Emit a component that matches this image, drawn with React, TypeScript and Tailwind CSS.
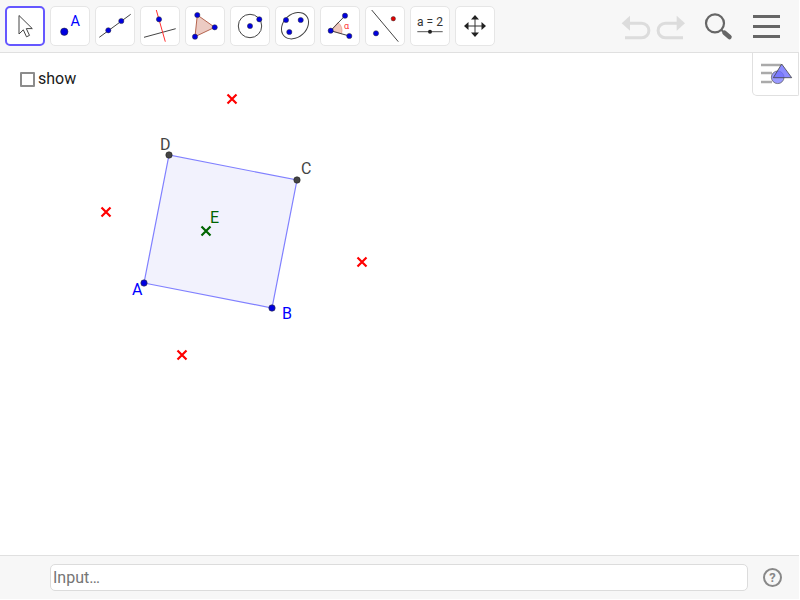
import type { ReactNode } from "react";

const font = { fontFamily: "Roboto, sans-serif" };

function Dot({ x, y, r = 2.6, fill = "#0000e0" }: { x: number; y: number; r?: number; fill?: string }) {
  return <circle cx={x} cy={y} r={r} fill={fill} stroke="#333" strokeWidth={0.5} />;
}

function ToolButton({ active, children }: { active?: boolean; children: ReactNode }) {
  return (
    <div
      className={
        active
          ? "w-10 h-10 shrink-0 bg-white rounded-[5px] border-2 border-[#6557ff]"
          : "w-10 h-10 shrink-0 bg-white rounded-[5px] border border-[#e6e6e6]"
      }
    >
      <svg
        width="40"
        height="40"
        viewBox="0 0 40 40"
        className={active ? "-mt-[2px] -ml-[2px]" : "-mt-px -ml-px"}
      >
        {children}
      </svg>
    </div>
  );
}

function Cross({ x, y, color }: { x: number; y: number; color: string }) {
  return (
    <path
      d={`M${x - 4.5} ${y - 4.5}L${x + 4.5} ${y + 4.5}M${x + 4.5} ${y - 4.5}L${x - 4.5} ${y + 4.5}`}
      stroke={color}
      strokeWidth={2.2}
      fill="none"
    />
  );
}

function Toolbar() {
  return (
    <div className="h-[53px] shrink-0 bg-[#f7f7f7] border-b border-[#e0e0e0] flex items-start pt-[6px] pl-[5px]">
      <div className="flex gap-[5px]">
        <ToolButton active>
          <path
            d="M14 9.5V28l4.3-4.2 3.2 7 3-1.4-3.2-6.8h6z"
            fill="#fff"
            stroke="#444"
            strokeWidth={1}
            strokeLinejoin="round"
          />
        </ToolButton>
        <ToolButton>
          <circle cx={14.3} cy={25.7} r={3.7} fill="#0000e0" stroke="#222" strokeWidth={0.5} />
          <text x={20.5} y={19.7} fontSize={14.5} fill="#0000ff" style={font}>
            A
          </text>
        </ToolButton>
        <ToolButton>
          <line x1={4.3} y1={31.3} x2={35.7} y2={8.3} stroke="#444" strokeWidth={1} />
          <Dot x={13.3} y={24.3} />
          <Dot x={26.3} y={15} />
        </ToolButton>
        <ToolButton>
          <line x1={4} y1={31.3} x2={35.7} y2={22.7} stroke="#444" strokeWidth={1} />
          <line x1={16.3} y1={4} x2={25.3} y2={35.7} stroke="#ff3030" strokeWidth={1} />
          <Dot x={19} y={13.3} />
        </ToolButton>
        <ToolButton>
          <path d="M12.3 9L29.7 21.3L10 30.7z" fill="#eccbc3" stroke="#b5654f" strokeWidth={1} />
          <Dot x={12.3} y={9} />
          <Dot x={29.7} y={21.3} />
          <Dot x={10} y={30.7} />
        </ToolButton>
        <ToolButton>
          <circle cx={20} cy={20} r={11.7} fill="none" stroke="#444" strokeWidth={1} />
          <Dot x={20} y={20} />
          <Dot x={29.3} y={13.3} />
        </ToolButton>
        <ToolButton>
          <ellipse
            cx={20}
            cy={19.7}
            rx={15}
            ry={11.5}
            transform="rotate(-42 20 19.7)"
            fill="none"
            stroke="#444"
            strokeWidth={1}
          />
          <Dot x={11} y={14} />
          <Dot x={25.7} y={14} />
          <Dot x={14.3} y={26} />
        </ToolButton>
        <ToolButton>
          <path d="M10.7 24.7L18 16.4A11 11 0 0 1 21.5 27.8z" fill="#f0c8bc" stroke="#e08a80" strokeWidth={0.6} />
          <line x1={10.7} y1={24.7} x2={25} y2={9.7} stroke="#444" strokeWidth={1} />
          <line x1={10.7} y1={24.7} x2={29.3} y2={30} stroke="#444" strokeWidth={1} />
          <text x={24} y={23} fontSize={9} fill="#ff3030" style={font}>
            α
          </text>
          <Dot x={10.7} y={24.7} />
          <Dot x={25} y={9.7} />
          <Dot x={29.3} y={30} />
        </ToolButton>
        <ToolButton>
          <line x1={6.7} y1={4} x2={33.3} y2={35.7} stroke="#444" strokeWidth={1} />
          <Dot x={28.3} y={12.7} r={2.2} fill="#e00000" />
          <Dot x={11} y={27.3} />
        </ToolButton>
        <ToolButton>
          <text x={20} y={19.5} fontSize={12} fill="#333" textAnchor="middle" style={font}>
            a = 2
          </text>
          <line x1={7.3} y1={25.7} x2={32.7} y2={25.7} stroke="#555" strokeWidth={1} />
          <circle cx={20} cy={25.7} r={2} fill="#222" />
        </ToolButton>
        <ToolButton>
          <path d="M20 12V28M12 20H28" stroke="#333" strokeWidth={1} />
          <path
            d="M20 9L24 13.5H16zM20 31L24 26.5H16zM9 20L13.5 16V24zM31 20L26.5 16V24z"
            fill="#222"
          />
        </ToolButton>
      </div>
      <svg width="70" height="30" viewBox="620 14 70 30" className="ml-[125px] mt-[8px] shrink-0">
        <path d="M621.7 23.3L630 15.7V30.7z" fill="#dcdcdc" />
        <path d="M629 23.3H641.7a7 7 0 0 1 0 14.4H625" fill="none" stroke="#dcdcdc" strokeWidth={3} />
        <path d="M685 23.3L676.7 15.7V30.7z" fill="#dcdcdc" />
        <path d="M678 23.3H665.3a7 7 0 0 0 0 14.4H683" fill="none" stroke="#dcdcdc" strokeWidth={3} />
      </svg>
      <svg width="34" height="34" viewBox="700 10 34 34" className="ml-[10px] mt-[4px] shrink-0">
        <circle cx={715} cy={23.3} r={9} fill="none" stroke="#666" strokeWidth={2.2} />
        <line x1={721.5} y1={30} x2={724} y2={32.5} stroke="#666" strokeWidth={2} />
        <line x1={724.5} y1={32.7} x2={729.5} y2={37} stroke="#666" strokeWidth={4.5} strokeLinecap="round" />
      </svg>
      <div className="w-[27px] ml-[19px] mt-[9px] flex flex-col gap-[7px] shrink-0">
        <div className="h-[3px] bg-[#666]" />
        <div className="h-[3px] bg-[#666]" />
        <div className="h-[3px] bg-[#666]" />
      </div>
    </div>
  );
}

function Canvas() {
  return (
    <div className="relative flex-1 bg-white">
      <svg width="799" height="502" viewBox="0 53 799 502" className="absolute inset-0" style={font}>
        <path
          d="M144 283L272 308L297 180L169 155z"
          fill="#f2f2fd"
          stroke="#8080ff"
          strokeWidth={1.2}
        />
        <Cross x={232} y={99} color="#ff0000" />
        <Cross x={106} y={212} color="#ff0000" />
        <Cross x={362} y={262} color="#ff0000" />
        <Cross x={182} y={355} color="#ff0000" />
        <Cross x={206} y={231} color="#006400" />
        <circle cx={144} cy={283} r={3.2} fill="#0000e0" stroke="#333" strokeWidth={0.6} />
        <circle cx={272} cy={308} r={3.2} fill="#0000e0" stroke="#333" strokeWidth={0.6} />
        <circle cx={297} cy={180} r={3.2} fill="#444" stroke="#222" strokeWidth={0.6} />
        <circle cx={169} cy={155} r={3.2} fill="#444" stroke="#222" strokeWidth={0.6} />
        <text x={160} y={150} fontSize={16} fill="#444">D</text>
        <text x={301} y={174} fontSize={16} fill="#444">C</text>
        <text x={210} y={223} fontSize={16} fill="#006400">E</text>
        <text x={132} y={295} fontSize={16} fill="#0000ff">A</text>
        <text x={282} y={319} fontSize={16} fill="#0000ff">B</text>
      </svg>
      <div className="absolute left-[20px] top-[17px] flex items-center gap-[3px] text-[16px] leading-[18px] text-[#1a1a1a]" style={font}>
        <div className="w-[15px] h-[15px] border-2 border-[#8c8c8c] rounded-[1px] bg-white" />
        <span>show</span>
      </div>
      <div className="absolute right-0 top-0 w-[47px] h-[43px] bg-white border-l border-b border-r border-[#e0e0e0] rounded-bl-[5px] rounded-br-[2px]">
        <svg width="45" height="42" viewBox="753 53 45 42">
          <path d="M761 65H781M761 73H772M761 82H772" stroke="#aaa" strokeWidth={2.4} fill="none" />
          <circle cx={777.7} cy={77.3} r={6.3} fill="#9a9aff" stroke="#555" strokeWidth={0.7} />
          <path d="M781.7 64L791.7 77.7H773.3z" fill="#6f6fff" fillOpacity={0.8} stroke="#444" strokeWidth={0.8} />
        </svg>
      </div>
    </div>
  );
}

function InputBar() {
  return (
    <div className="h-[44px] shrink-0 bg-[#f7f7f7] border-t border-[#e0e0e0] flex items-center pl-[50px]">
      <div
        className="w-[698px] h-[27px] bg-white border border-[#dcdcdc] rounded-[5px] pl-[2px] flex items-center text-[16px] text-[#757575]"
        style={font}
      >
        Input…
      </div>
      <div
        className="w-[19px] h-[19px] ml-[15px] rounded-full border-2 border-[#888] flex items-center justify-center text-[13px] font-bold text-[#888]"
        style={font}
      >
        ?
      </div>
    </div>
  );
}

export default function App() {
  return (
    <div className="w-[799px] h-[599px] flex flex-col bg-white overflow-hidden">
      <Toolbar />
      <Canvas />
      <InputBar />
    </div>
  );
}
